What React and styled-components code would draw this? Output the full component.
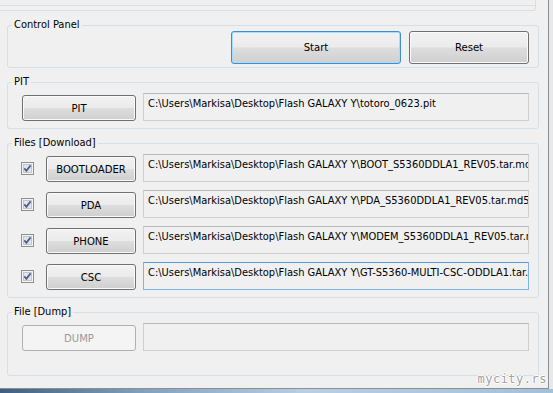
import React from 'react'
import styled, { createGlobalStyle } from 'styled-components'

const Global = createGlobalStyle`
    body {
        margin: 0;
        background: #e6e9ec;
        font-family: "DejaVu Sans Condensed", "Liberation Sans", sans-serif;
    }
`

const files = [
    { name: 'BOOTLOADER', path: 'C:\\Users\\Markisa\\Desktop\\Flash GALAXY Y\\BOOT_S5360DDLA1_REV05.tar.md5' },
    { name: 'PDA', path: 'C:\\Users\\Markisa\\Desktop\\Flash GALAXY Y\\PDA_S5360DDLA1_REV05.tar.md5' },
    { name: 'PHONE', path: 'C:\\Users\\Markisa\\Desktop\\Flash GALAXY Y\\MODEM_S5360DDLA1_REV05.tar.md5' },
    { name: 'CSC', path: 'C:\\Users\\Markisa\\Desktop\\Flash GALAXY Y\\GT-S5360-MULTI-CSC-ODDLA1.tar.md5', focus: true },
]

const CheckBox = () => (
    <Check viewBox="0 0 13 13" width="13" height="13">
        <rect x="0.5" y="0.5" width="12" height="12" fill="#f4f4f4" stroke="#8f8f8f" />
        <rect x="2.5" y="2.5" width="8" height="8" fill="#e2e4e8" stroke="#c4c6cb" />
        <path d="M3.3 6.4 L5.4 8.8 L9.6 3.4" fill="none" stroke="#4d5f94" strokeWidth="1.8" />
    </Check>
)

const App = () => {
    return (
        <>
            <Global />
            <Window>
                <TopEdge>
                    <TopInner />
                </TopEdge>
                <Content>
                    <Group $h={49} $pt={0}>
                        <Legend>Control Panel</Legend>
                        <Actions>
                            <Button $w={170} $h={33} $focus>Start</Button>
                            <Button $w={120} $h={33}>Reset</Button>
                        </Actions>
                    </Group>
                    <Group $h={53} $pt={5}>
                        <Legend>PIT</Legend>
                        <Row>
                            <Button $w={114}>PIT</Button>
                            <Field>C:\Users\Markisa\Desktop\Flash GALAXY Y\totoro_0623.pit</Field>
                        </Row>
                    </Group>
                    <Group $h={161} $pt={5}>
                        <Legend>Files [Download]</Legend>
                        <Rows>
                            {files.map(f => (
                                <Row key={f.name}>
                                    <CheckBox />
                                    <Button $w={90}>{f.name}</Button>
                                    <Field $focus={f.focus}>{f.path}</Field>
                                </Row>
                            ))}
                        </Rows>
                    </Group>
                    <Group $h={70} $pt={5}>
                        <Legend>File [Dump]</Legend>
                        <Row>
                            <Button $w={114} disabled>DUMP</Button>
                            <Field />
                        </Row>
                    </Group>
                </Content>
                <Watermark>mycity.rs</Watermark>
            </Window>
            <Taskbar />
        </>
    )
}

const Window = styled.div`
    position: relative;
    width: 549px;
    height: 389px;
    box-sizing: border-box;
    background: #f0f0f0;
    border-right: 1px solid #8e8e8e;
    border-bottom: 1px solid #8e8e8e;
    display: flex;
    flex-direction: column;
`

const TopEdge = styled.div`
    width: 540px;
    height: 11px;
    margin-left: -4px;
    box-sizing: border-box;
    border-right: 1px solid #d5dfe5;
    border-bottom: 1px solid #d5dfe5;
    border-bottom-right-radius: 3px;
`

const TopInner = styled.div`
    height: 5px;
    border-bottom: 1px solid #dedede;
`

const Content = styled.div`
    display: flex;
    flex-direction: column;
    gap: 8px;
    padding: 8px 0 0 7px;
`

const Group = styled.fieldset`
    width: 532px;
    height: ${p => p.$h}px;
    box-sizing: border-box;
    margin: 0;
    padding: ${p => p.$pt}px 9px 0 14px;
    border: 1px solid #d5dfe5;
    border-radius: 3px;
    min-width: 0;
`

const Legend = styled.legend`
    margin-left: -10px;
    padding: 0 2px;
    font-size: 11px;
    line-height: 12px;
    color: #000;
`

const Actions = styled.div`
    display: flex;
    justify-content: flex-end;
    gap: 8px;
`

const Rows = styled.div`
    display: flex;
    flex-direction: column;
    gap: 8px;
`

const Row = styled.div`
    display: flex;
    align-items: flex-end;
    gap: 7px;
`

const Check = styled.svg`
    display: block;
    align-self: center;
    flex: none;
    margin: 0 5px 0 -1px;
`

const Button = styled.button`
    flex: none;
    width: ${p => p.$w}px;
    height: ${p => p.$h || 26}px;
    box-sizing: border-box;
    padding: 0;
    font-family: inherit;
    font-size: 11.2px;
    color: #000;
    border: 1px solid ${p => (p.$focus ? '#3c8ed0' : '#707070')};
    border-radius: 3px;
    background: linear-gradient(#f2f2f2 0%, #ebebeb 48%, #dddddd 52%, #cfcfcf 100%);
    box-shadow: inset 0 0 0 1px ${p => (p.$focus ? '#a9dcf6' : '#fafafa')};
    &:disabled {
        color: #9a9a9a;
        border-color: #adb2b5;
        background: #f4f4f4;
        box-shadow: none;
    }
`

const Field = styled.div`
    flex: 1;
    height: 28px;
    box-sizing: border-box;
    padding: 3px 4px 0 4px;
    font-size: 11px;
    line-height: 14px;
    color: #000;
    white-space: nowrap;
    overflow: hidden;
    background: #f0f0f0;
    border: 1px solid ${p => (p.$focus ? '#7eb4ea' : '#cfcfcf')};
    border-top-color: ${p => (p.$focus ? '#5c9ad2' : '#b8b8b8')};
`

const Watermark = styled.div`
    position: absolute;
    right: 1px;
    bottom: 3px;
    font-family: "DejaVu Sans Mono", "Liberation Mono", monospace;
    font-size: 12px;
    line-height: 12px;
    letter-spacing: 0.5px;
    color: #a2a2a2;
    text-shadow: 1px 0 0 #fff, -1px 0 0 #fff, 0 1px 0 #fff, 0 -1px 0 #fff;
`

const Taskbar = styled.div`
    width: 553px;
    height: 4px;
    background: linear-gradient(to right, #3f5f82 0%, #7f9fc0 25%, #b8cfe5 55%, #a3c0dc 100%);
`

export default App
